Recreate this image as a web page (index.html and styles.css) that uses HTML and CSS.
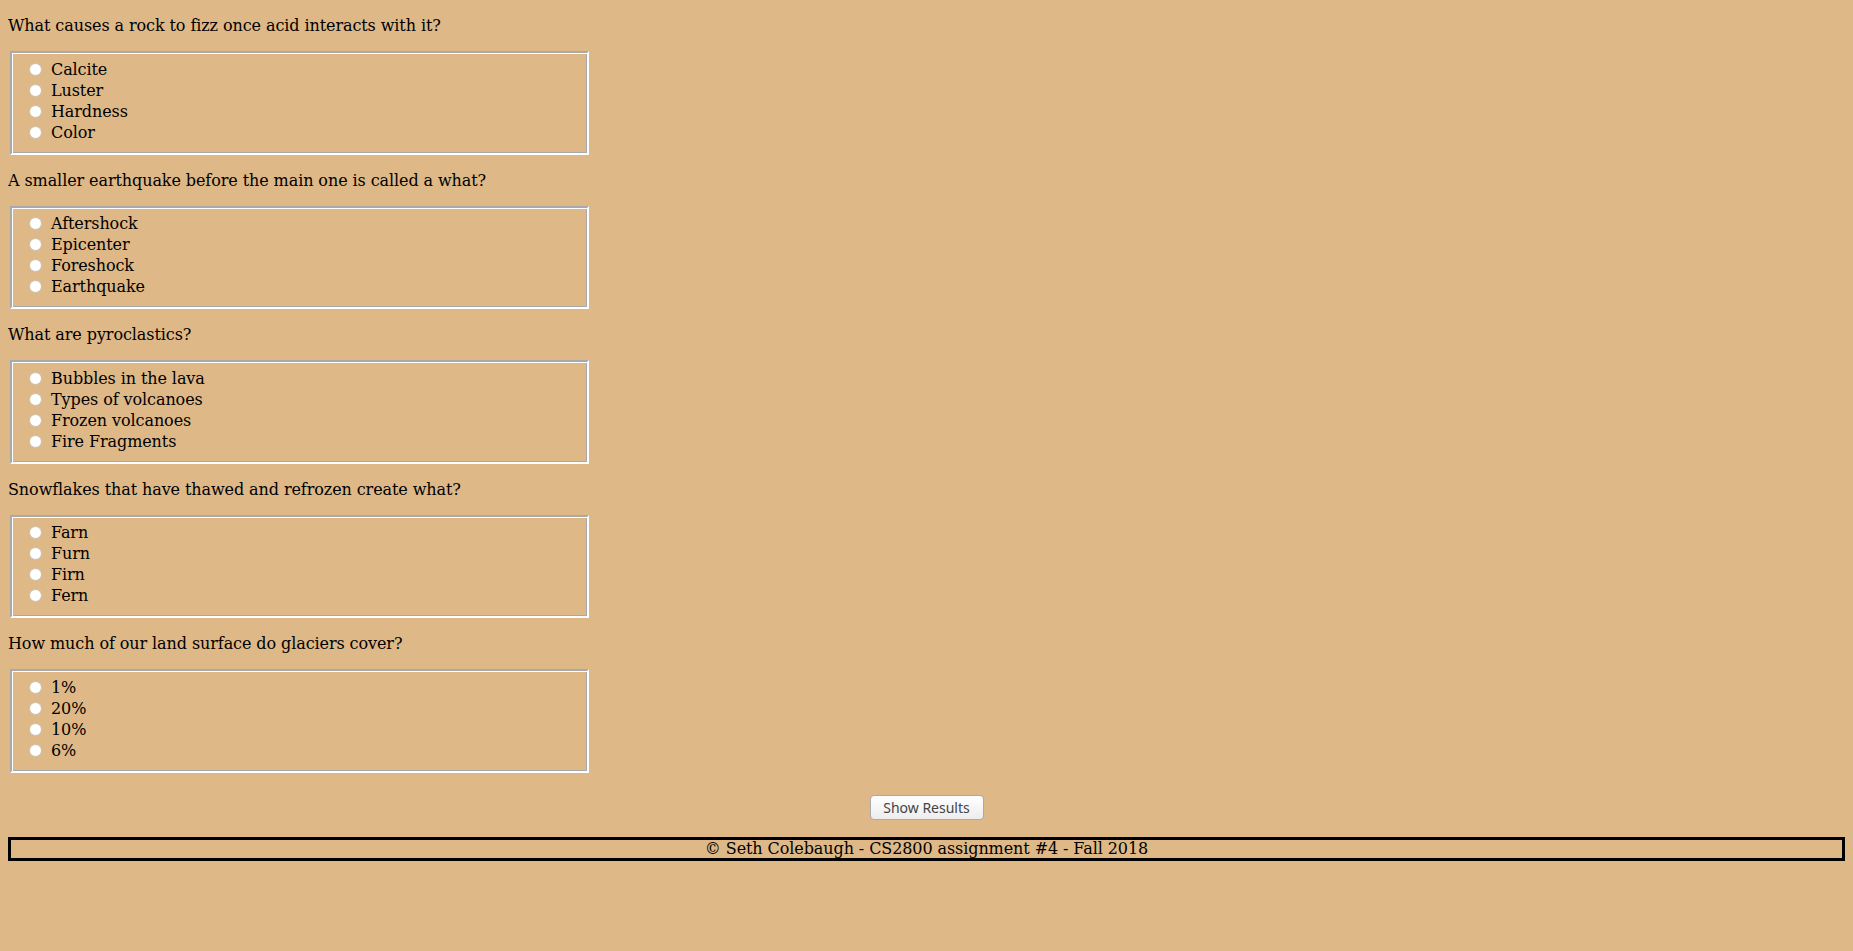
FILE: index.html
```html
<!DOCTYPE html>
<html lang="en">
<head>
<meta charset="utf-8">
<title>Earth Science Quiz</title>
<link rel="stylesheet" href="styles.css">
</head>
<body>
<form class="quiz">
  <p class="question">What causes a rock to fizz once acid interacts with it?</p>
  <fieldset class="choices">
    <label class="choice"><input type="radio" name="q1" value="a"> Calcite</label><br>
    <label class="choice"><input type="radio" name="q1" value="b"> Luster</label><br>
    <label class="choice"><input type="radio" name="q1" value="c"> Hardness</label><br>
    <label class="choice"><input type="radio" name="q1" value="d"> Color</label>
  </fieldset>

  <p class="question">A smaller earthquake before the main one is called a what?</p>
  <fieldset class="choices">
    <label class="choice"><input type="radio" name="q2" value="a"> Aftershock</label><br>
    <label class="choice"><input type="radio" name="q2" value="b"> Epicenter</label><br>
    <label class="choice"><input type="radio" name="q2" value="c"> Foreshock</label><br>
    <label class="choice"><input type="radio" name="q2" value="d"> Earthquake</label>
  </fieldset>

  <p class="question">What are pyroclastics?</p>
  <fieldset class="choices">
    <label class="choice"><input type="radio" name="q3" value="a"> Bubbles in the lava</label><br>
    <label class="choice"><input type="radio" name="q3" value="b"> Types of volcanoes</label><br>
    <label class="choice"><input type="radio" name="q3" value="c"> Frozen volcanoes</label><br>
    <label class="choice"><input type="radio" name="q3" value="d"> Fire Fragments</label>
  </fieldset>

  <p class="question">Snowflakes that have thawed and refrozen create what?</p>
  <fieldset class="choices">
    <label class="choice"><input type="radio" name="q4" value="a"> Farn</label><br>
    <label class="choice"><input type="radio" name="q4" value="b"> Furn</label><br>
    <label class="choice"><input type="radio" name="q4" value="c"> Firn</label><br>
    <label class="choice"><input type="radio" name="q4" value="d"> Fern</label>
  </fieldset>

  <p class="question">How much of our land surface do glaciers cover?</p>
  <fieldset class="choices">
    <label class="choice"><input type="radio" name="q5" value="a"> 1%</label><br>
    <label class="choice"><input type="radio" name="q5" value="b"> 20%</label><br>
    <label class="choice"><input type="radio" name="q5" value="c"> 10%</label><br>
    <label class="choice"><input type="radio" name="q5" value="d"> 6%</label>
  </fieldset>

  <div class="actions">
    <button type="button" class="results-btn">Show Results</button>
  </div>
</form>
<footer class="footer">© Seth Colebaugh - CS2800 assignment #4 - Fall 2018</footer>
</body>
</html>
```

FILE: styles.css
```css
html {
  background: #deb887;
}
body {
  margin: 8px;
  background: #deb887;
  color: #000;
  font-family: "DejaVu Serif", serif;
  font-size: 16px;
  letter-spacing: -0.09px;
}
.quiz {
  margin: 0;
}
.question {
  margin: 16px 0;
  line-height: 19px;
}
.question:first-child {
  margin-top: 8px;
}
.choices {
  width: 30%;
  margin: 0 2px;
  padding: 5.6px 12px 10px;
  line-height: 21px;
  border-style: solid;
  border-width: 2px;
  border-color: #a9a9a9 #ffffff #ffffff #a9a9a9;
  box-shadow: inset 1px 1px 0 #ffffff, inset -1px -1px 0 #a9a9a9;
}
.choice input {
  appearance: none;
  -webkit-appearance: none;
  box-sizing: border-box;
  width: 13px;
  height: 13px;
  margin: 3px 4px 0 5px;
  border: 1px solid #cdc6ba;
  border-radius: 50%;
  background: radial-gradient(circle, #ffffff 55%, #f0f0f0 100%);
  vertical-align: baseline;
  position: relative;
  top: 1px;
}
.actions {
  margin-top: 22px;
  text-align: center;
  line-height: 0;
}
.results-btn {
  font-family: "Noto Sans", "DejaVu Sans", sans-serif;
  font-size: 14px;
  letter-spacing: 0;
  line-height: 23px;
  color: #444444;
  height: 25px;
  width: 114px;
  padding: 0 6px;
  border: 1px solid #aaaaaa;
  border-radius: 4px;
  background: linear-gradient(#ffffff, #ededed);
}
.footer {
  margin-top: 17px;
  border: 3px solid #000;
  text-align: center;
  line-height: 18px;
}
```
